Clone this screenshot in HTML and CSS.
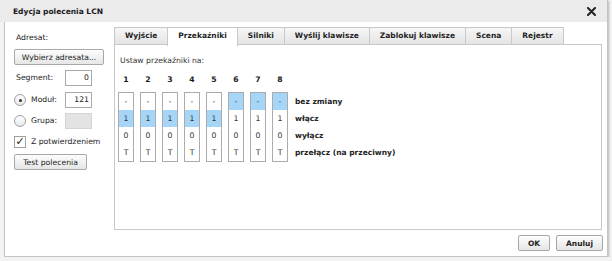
FILE: index.html
```html
<!DOCTYPE html>
<html>
<head>
  <meta charset="utf-8">
  <title>Edycja polecenia LCN</title>
  <link rel="stylesheet" href="styles.css">
</head>
<body>
  <div class="dialog">
    <div class="titlebar">
      <span class="title">Edycja polecenia LCN</span>
      <svg class="close" width="9" height="9" viewBox="0 0 9 9">
        <path d="M1 1 L8 8 M8 1 L1 8" stroke="#222" stroke-width="2" stroke-linecap="round"/>
      </svg>
    </div>
    <div class="dialog-body">
      <div class="sidebar">
        <div class="row">Adresat:</div>
        <button class="btn btn-wide">Wybierz adresata...</button>
        <div class="row field">
          <span class="label label-plain">Segment:</span>
          <span class="input">0</span>
        </div>
        <div class="row field field-gap">
          <span class="radio checked"></span>
          <span class="label">Moduł:</span>
          <span class="input">121</span>
        </div>
        <div class="row field">
          <span class="radio"></span>
          <span class="label">Grupa:</span>
          <span class="input disabled"></span>
        </div>
        <div class="row field">
          <span class="checkbox">&#x2713;</span>
          <span class="label label-auto">Z potwierdzeniem</span>
        </div>
        <button class="btn btn-test">Test polecenia</button>
      </div>
      <div class="tabs">
        <div class="tab-strip">
          <div class="tab">Wyjście</div>
          <div class="tab active">Przekaźniki</div>
          <div class="tab">Silniki</div>
          <div class="tab">Wyślij klawisze</div>
          <div class="tab">Zablokuj klawisze</div>
          <div class="tab">Scena</div>
          <div class="tab">Rejestr</div>
        </div>
        <div class="tab-panel">
          <div class="intro">Ustaw przekaźniki na:</div>
          <div class="relays">
            <div class="relay">
              <div class="relay-num">1</div>
              <div class="relay-box"><div class="cell">-</div><div class="cell on">1</div><div class="cell">0</div><div class="cell">T</div></div>
            </div>
            <div class="relay">
              <div class="relay-num">2</div>
              <div class="relay-box"><div class="cell">-</div><div class="cell on">1</div><div class="cell">0</div><div class="cell">T</div></div>
            </div>
            <div class="relay">
              <div class="relay-num">3</div>
              <div class="relay-box"><div class="cell">-</div><div class="cell on">1</div><div class="cell">0</div><div class="cell">T</div></div>
            </div>
            <div class="relay">
              <div class="relay-num">4</div>
              <div class="relay-box"><div class="cell">-</div><div class="cell on">1</div><div class="cell">0</div><div class="cell">T</div></div>
            </div>
            <div class="relay">
              <div class="relay-num">5</div>
              <div class="relay-box"><div class="cell">-</div><div class="cell on">1</div><div class="cell">0</div><div class="cell">T</div></div>
            </div>
            <div class="relay">
              <div class="relay-num">6</div>
              <div class="relay-box"><div class="cell on">-</div><div class="cell">1</div><div class="cell">0</div><div class="cell">T</div></div>
            </div>
            <div class="relay">
              <div class="relay-num">7</div>
              <div class="relay-box"><div class="cell on">-</div><div class="cell">1</div><div class="cell">0</div><div class="cell">T</div></div>
            </div>
            <div class="relay">
              <div class="relay-num">8</div>
              <div class="relay-box"><div class="cell on">-</div><div class="cell">1</div><div class="cell">0</div><div class="cell">T</div></div>
            </div>
            <div class="legend">
              <div class="legend-item">bez zmiany</div>
              <div class="legend-item">włącz</div>
              <div class="legend-item">wyłącz</div>
              <div class="legend-item">przełącz (na przeciwny)</div>
            </div>
          </div>
        </div>
      </div>
    </div>
    <div class="footer">
      <button class="btn btn-ok">OK</button>
      <button class="btn btn-cancel">Anuluj</button>
    </div>
  </div>
</body>
</html>
```

FILE: styles.css
```css
body {
  margin: 0;
  background-color: #f3f3f3;
  font-family: "DejaVu Sans", Verdana, sans-serif;
  font-size: 7.7px;
  color: #222;
}

.dialog {
  width: 602px;
  height: 256px;
  margin-left: 4px;
  background-color: #fff;
  border: 1px solid #c4c4c4;
  border-top: none;
  box-shadow: 1px 1px 2px rgba(0, 0, 0, 0.25);
  display: flex;
  flex-direction: column;
}

.titlebar {
  height: 22px;
  margin-left: -5px;
  padding-left: 13px;
  padding-right: 11px;
  background-color: #ebebeb;
  display: flex;
  align-items: center;
  justify-content: space-between;
}

.title {
  font-size: 7.5px;
  font-weight: bold;
  color: #1a1a1a;
}

.dialog-body {
  display: flex;
  height: 207px;
}

/* left column */
.sidebar {
  width: 100px;
  padding: 8px 0 0 9px;
}

.row {
  height: 16px;
  line-height: 16px;
  padding-left: 2px;
}

.field {
  display: flex;
  align-items: center;
  margin-top: 5px;
  padding-left: 0;
}

.field-gap {
  margin-top: 6px;
}

.label {
  margin-left: 5px;
  width: 34px;
}

.label-plain {
  margin-left: 2px;
  width: 49px;
}

.label-auto {
  width: auto;
}

.input {
  width: 23px;
  height: 14px;
  line-height: 14px;
  border: 1px solid #a9a9a9;
  text-align: right;
  padding-right: 2px;
  color: #222;
}

.input.disabled {
  background-color: #e3e3e3;
  border-color: #d4d4d4;
}

.radio {
  width: 10px;
  height: 10px;
  border: 1px solid #a0a0a0;
  border-radius: 50%;
  background: linear-gradient(#fff, #e8e8e8);
  display: flex;
  align-items: center;
  justify-content: center;
}

.radio.checked::after {
  content: "";
  width: 3px;
  height: 3px;
  border-radius: 50%;
  background-color: #333;
}

.checkbox {
  width: 10px;
  height: 10px;
  border: 1px solid #a0a0a0;
  background-color: #fff;
  font-size: 11px;
  line-height: 9px;
  text-align: center;
  color: #222;
}

.btn {
  font-family: inherit;
  font-size: 7.7px;
  color: #222;
  height: 16px;
  padding: 0;
  border: 1px solid #a8a8a8;
  border-radius: 2px;
  background: linear-gradient(#fdfdfd, #e6e6e6);
}

.btn-wide {
  display: block;
  width: 90px;
  margin-top: 3px;
}

.btn-test {
  display: block;
  width: 73px;
  margin-top: 4px;
}

/* tabs */
.tabs {
  width: 488px;
  padding-top: 5px;
}

.tab-strip {
  display: flex;
  height: 17px;
}

.tab {
  height: 16px;
  line-height: 16px;
  padding: 0 10px;
  font-size: 7.5px;
  font-weight: bold;
  color: #222;
  background: linear-gradient(#f6f6f6, #e4e4e4);
  border: 1px solid #c8c8c8;
  border-bottom: none;
  margin-right: -1px;
}

.tab.active {
  background: #fff;
  height: 18px;
  position: relative;
  z-index: 1;
}

.tab-panel {
  height: 184px;
  border: 1px solid #c8c8c8;
  padding: 0 0 0 3px;
}

.intro {
  margin-top: 8px;
  line-height: 16px;
  padding-left: 2px;
  color: #333;
}

.relays {
  display: flex;
  gap: 6px;
  margin-top: 3px;
}

.relay {
  width: 16px;
}

.relay-num {
  height: 16px;
  line-height: 16px;
  text-align: center;
  font-weight: bold;
  color: #1a1a1a;
}

.relay-box {
  margin-top: 4px;
  border: 1px solid #ababab;
}

.cell {
  height: 17px;
  line-height: 17px;
  text-align: center;
  color: #333;
}

.cell.on {
  background-color: #a6d6f7;
}

.legend {
  margin-top: 21px;
  padding-left: 1px;
}

.legend-item {
  height: 17px;
  line-height: 17px;
  font-size: 7.5px;
  font-weight: bold;
  color: #222;
}

/* bottom buttons */
.footer {
  display: flex;
  justify-content: flex-end;
  gap: 6px;
  padding: 6px 4px 0 0;
}

.btn-ok {
  width: 32px;
  font-size: 7.5px;
  font-weight: bold;
}

.btn-cancel {
  width: 47px;
  font-size: 7.5px;
  font-weight: bold;
}
```
